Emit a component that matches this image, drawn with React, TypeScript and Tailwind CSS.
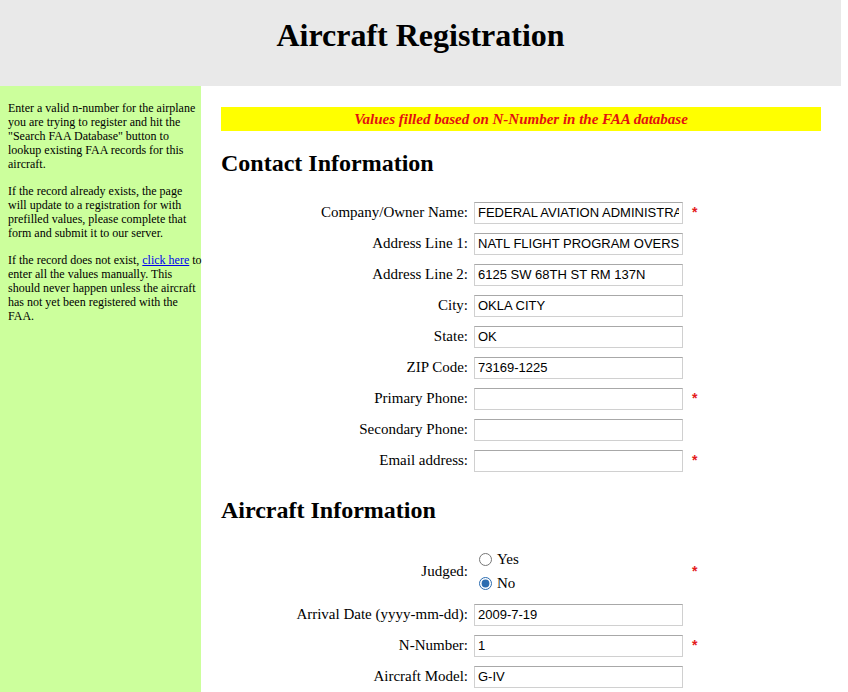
import React from "react";

const contactRows = [
  { label: "Company/Owner Name:", value: "FEDERAL AVIATION ADMINISTRATION", required: true },
  { label: "Address Line 1:", value: "NATL FLIGHT PROGRAM OVERSIGHT", required: false },
  { label: "Address Line 2:", value: "6125 SW 68TH ST RM 137N", required: false },
  { label: "City:", value: "OKLA CITY", required: false },
  { label: "State:", value: "OK", required: false },
  { label: "ZIP Code:", value: "73169-1225", required: false },
  { label: "Primary Phone:", value: "", required: true },
  { label: "Secondary Phone:", value: "", required: false },
  { label: "Email address:", value: "", required: true },
];

const aircraftRows = [
  { label: "Arrival Date (yyyy-mm-dd):", value: "2009-7-19", required: false },
  { label: "N-Number:", value: "1", required: true },
  { label: "Aircraft Model:", value: "G-IV", required: false },
];

function Star({ show }: { show: boolean }) {
  return (
    <span className="w-[20px] pl-[9px] text-[14px] font-bold text-[#e41b1b] font-['Liberation_Sans',sans-serif]">
      {show ? "*" : ""}
    </span>
  );
}

function Row({ label, value, required }: { label: string; value: string; required: boolean }) {
  return (
    <div className="flex h-[31px] items-center">
      <label className="w-[253px] pr-[6px] text-right">{label}</label>
      <input
        readOnly
        defaultValue={value}
        className="h-[22px] w-[209px] border border-[#d0d0d0] border-t-[#a8a8a8] bg-white px-[3px] text-[13px] text-black outline-none font-['Liberation_Sans',sans-serif]"
      />
      <Star show={required} />
    </div>
  );
}

export default function App() {
  return (
    <div className="w-[841px] min-h-[692px] bg-white text-black font-['Liberation_Serif',serif]">
      <header className="h-[86px] bg-[#e9e9e9] pt-[17px] text-center">
        <h1 className="text-[32px] font-bold leading-[37px]">Aircraft Registration</h1>
      </header>

      <div className="flex">
        <aside className="w-[201px] shrink-0 bg-[#ccff9c] pl-[8px] pt-[15px] text-[12px] leading-[14px] min-h-[606px]">
          <p className="mb-[13px]">
            Enter a valid n-number for the airplane you are trying to register and hit the "Search FAA
            Database" button to lookup existing FAA records for this aircraft.
          </p>
          <p className="mb-[13px]">
            If the record already exists, the page will update to a registration for with prefilled values,
            please complete that form and submit it to our server.
          </p>
          <div className="mr-[-6px]">
            <span>If the record does not exist, </span>
            <a href="#" className="text-[#0000ee] underline">
              click here
            </a>
            <span> to </span>
            <span>
              enter all the values manually. This should never happen unless the aircraft has not yet been
              registered with the FAA.
            </span>
          </div>
        </aside>

        <main className="w-[600px] ml-[20px] pt-[21px] text-[15px]">
          <div className="h-[24px] bg-[#ffff00] text-center text-[15px] font-bold italic leading-[24px] text-[#e31010]">
            Values filled based on N-Number in the FAA database
          </div>

          <h2 className="mt-[18px] text-[24px] font-bold leading-[28px]">Contact Information</h2>
          <div className="mt-[20px]">
            {contactRows.map((r) => (
              <Row key={r.label} {...r} />
            ))}
          </div>

          <h2 className="mt-[20px] text-[24px] font-bold leading-[28px]">Aircraft Information</h2>
          <div className="mt-[20px]">
            <div className="flex h-[55px] items-center">
              <label className="w-[253px] pr-[6px] text-right">Judged:</label>
              <div className="flex w-[209px] flex-col">
                <label className="flex h-[24px] items-center gap-[5px] pl-[5px]">
                  <input type="radio" name="judged" className="m-0 h-[13px] w-[13px]" />
                  Yes
                </label>
                <label className="flex h-[24px] items-center gap-[5px] pl-[5px]">
                  <input type="radio" name="judged" defaultChecked className="m-0 h-[13px] w-[13px] accent-[#2b6cb0]" />
                  No
                </label>
              </div>
              <Star show />
            </div>
            {aircraftRows.map((r) => (
              <Row key={r.label} {...r} />
            ))}
          </div>
        </main>
      </div>
    </div>
  );
}
